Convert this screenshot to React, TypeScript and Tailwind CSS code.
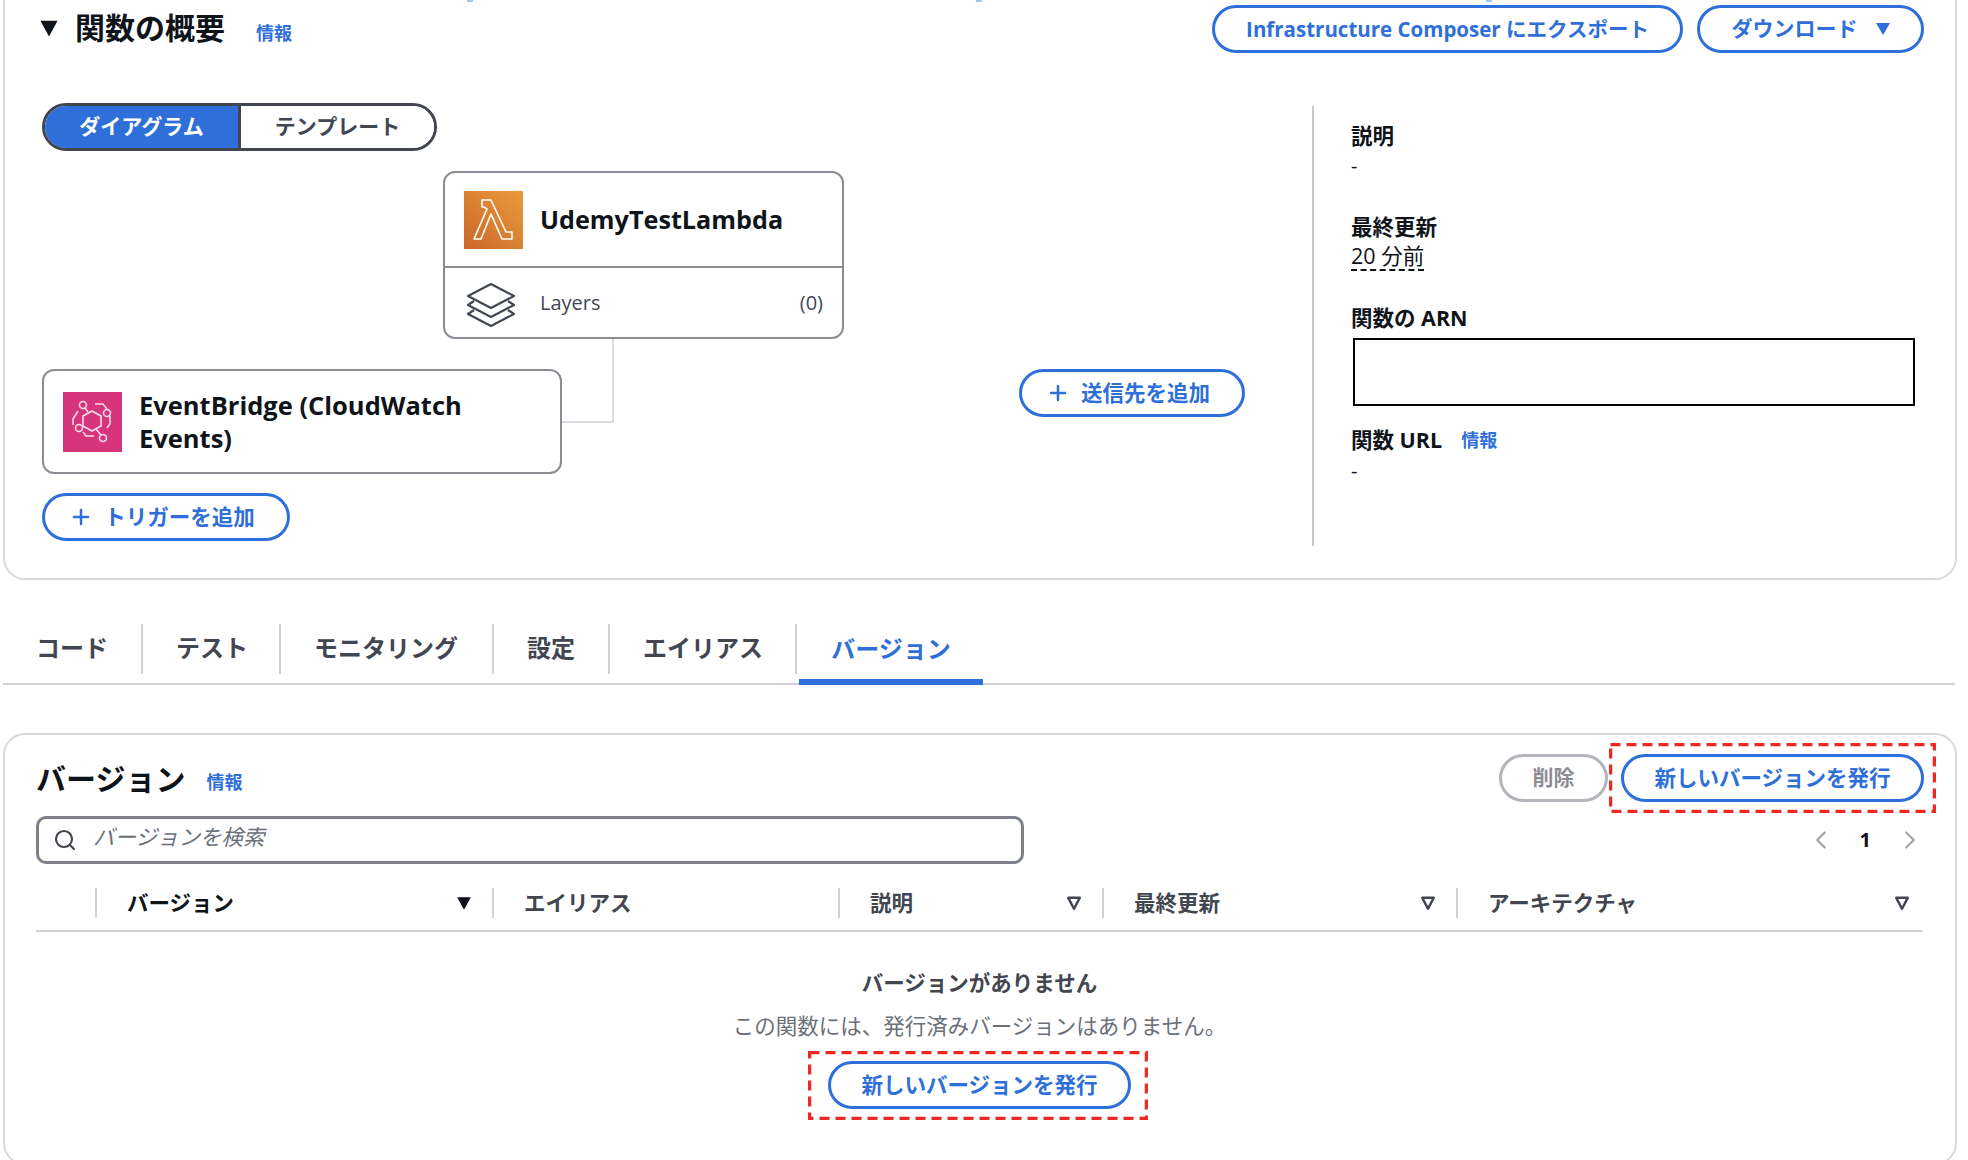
import { Plus, Search, ChevronLeft, ChevronRight } from "lucide-react";

const font = "font-['Open_Sans','Noto_Sans_CJK_JP',sans-serif]";

function BlueButton({ children, className }: { children: React.ReactNode; className: string }) {
  return (
    <button className={`flex h-[48px] items-center justify-center rounded-full border-[3px] border-[#2f6fd9] bg-white font-bold text-[#2f6fd9] ${className}`}>
      {children}
    </button>
  );
}

function Info({ className = "" }: { className?: string }) {
  return <span className={`text-[18px] font-bold text-[#2f6fd9] ${className}`}>情報</span>;
}

// red annotation frame drawn over the screenshot
function RedFrame({ w, h, className }: { w: number; h: number; className: string }) {
  return (
    <svg width={w} height={h} className={`absolute ${className}`} fill="none">
      <rect x="1.5" y="1.5" width={w - 3} height={h - 3} stroke="#ee2a24" strokeWidth="3.5" strokeDasharray="10 6" />
    </svg>
  );
}

function LambdaIcon() {
  return (
    <svg viewBox="0 0 59 58" className="h-[58px] w-[59px] shrink-0">
      <defs>
        <linearGradient id="lam" x1="0" y1="1" x2="1" y2="0">
          <stop offset="0" stopColor="#c9682a" />
          <stop offset="1" stopColor="#ea9a3c" />
        </linearGradient>
      </defs>
      <rect width="59" height="58" fill="url(#lam)" />
      <path
        d="M18 9h9l15 32h6v7h-10L27 23 17 48H10l13-30-3-2h-2z"
        fill="none"
        stroke="#fff"
        strokeWidth="1.6"
        strokeLinejoin="round"
      />
    </svg>
  );
}

function EventBridgeIcon() {
  return (
    <svg viewBox="0 0 59 60" className="h-[60px] w-[59px] shrink-0">
      <rect width="59" height="60" fill="#d6357c" />
      <g fill="none" stroke="#fbdbe9" strokeWidth="1.6">
        <path d="M20 24l9-5 9 5v10l-9 5-9-5z" />
        <circle cx="20" cy="13" r="3.5" />
        <circle cx="44" cy="21" r="3.5" />
        <circle cx="16" cy="36" r="3.5" />
        <circle cx="40" cy="46" r="3.5" />
        <path d="M32 12h8l4 5M22 16l3 4M47 24v8l-3 4M10 33v-6l5-8M20 40l3 4h8M33 37l5 6" />
      </g>
    </svg>
  );
}

function LayersIcon() {
  return (
    <svg viewBox="0 0 54 46" className="mt-[5px] h-[46px] w-[54px] shrink-0" fill="none" stroke="#414750" strokeWidth="2.2" strokeLinejoin="round">
      <path d="M27 2l23 12-23 12L4 14z" />
      <path d="M10 19l-6 4 23 12 23-12-6-4" />
      <path d="M10 28l-6 4 23 12 23-12-6-4" />
    </svg>
  );
}

function Filled({ className = "" }: { className?: string }) {
  return (
    <svg viewBox="0 0 14 14" className={`h-[16px] w-[16px] ${className}`}>
      <path d="M1 2h12L7 13z" fill="#0f141a" />
    </svg>
  );
}

function Hollow() {
  return (
    <svg viewBox="0 0 14 14" className="h-[16px] w-[16px]">
      <path d="M2 2.5h10L7 12z" fill="none" stroke="#424650" strokeWidth="2.2" strokeLinejoin="round" />
    </svg>
  );
}

function Label({ children }: { children: React.ReactNode }) {
  return <div className="text-[21.5px] font-bold leading-[28px] text-[#0f141a]">{children}</div>;
}

const tabs = [
  { label: "コード", w: "w-[107px]" },
  { label: "テスト", w: "w-[138px]" },
  { label: "モニタリング", w: "w-[213px]" },
  { label: "設定", w: "w-[116px]" },
  { label: "エイリアス", w: "w-[187px]" },
];

const columns = [
  { label: "バージョン", w: "w-[397px]", pr: "pr-[20px]", icon: "filled" },
  { label: "エイリアス", w: "w-[346px]", pr: "pr-[14px]", icon: "" },
  { label: "説明", w: "w-[264px]", pr: "pr-[20px]", icon: "hollow" },
  { label: "最終更新", w: "w-[354px]", pr: "pr-[20px]", icon: "hollow" },
  { label: "アーキテクチャ", w: "w-[467px]", pr: "pr-[13px]", icon: "hollow" },
];

export default function App() {
  return (
    <div className={`relative h-[1160px] w-[1968px] overflow-hidden bg-white ${font}`}>
      {/* 関数の概要 */}
      <section className="-mt-5 ml-[3px] flex h-[600px] w-[1954px] flex-col rounded-[22px] border-2 border-[#d8d8dd] pl-[37px] pr-[31px]">
        <div className="flex h-[121px] shrink-0 items-start justify-between pt-[23px]">
          <div className="-ml-[3px] mt-[4px] flex items-center">
            <Filled className="h-[20px] w-[20px]" />
            <h1 className="ml-[16px] text-[30px] font-bold leading-[38px] text-[#0f141a]">関数の概要</h1>
            <Info className="ml-[31px] mt-[10px]" />
          </div>
          <div className="flex gap-[14px]">
            <BlueButton className="w-[471px] text-[20.5px]">Infrastructure Composer にエクスポート</BlueButton>
            <BlueButton className="w-[227px] gap-[18px] text-[21px]">
              ダウンロード
              <svg viewBox="0 0 14 14" className="h-[14px] w-[14px]"><path d="M0 1h14L7 13z" fill="#2f6fd9" /></svg>
            </BlueButton>
          </div>
        </div>

        <div className="flex flex-1">
          {/* diagram */}
          <div className="relative w-[1270px] shrink-0">
            <div className="flex h-[48px] w-[395px] overflow-hidden rounded-full border-[3px] border-[#424650] text-[21px] font-bold">
              <div className="flex w-[193px] items-center justify-center bg-[#2f6fd9] text-white">ダイアグラム</div>
              <div className="flex flex-1 items-center justify-center border-l-[3px] border-[#424650] bg-white text-[#424650]">テンプレート</div>
            </div>

            <div className="ml-[401px] mt-[20px] w-[401px] rounded-[12px] border-2 border-[#8c8c94] bg-white">
              <div className="flex h-[95px] items-center gap-[17px] border-b-2 border-[#8c8c94] px-[19px]">
                <LambdaIcon />
                <span className="text-[25.2px] font-bold text-[#0f141a]">UdemyTestLambda</span>
              </div>
              <div className="flex h-[69px] items-center px-[19px] text-[20px] text-[#414750]">
                <LayersIcon />
                <span className="ml-[22px] flex-1">Layers</span>
                <span>(0)</span>
              </div>
            </div>

            {/* connector */}
            <div className="absolute left-[519px] top-[236px] h-[84px] w-[53px] border-b-2 border-r-2 border-[#dcdce0]" />

            <div className="relative mt-[30px] flex items-start justify-between pr-[67px]">
              <div className="flex h-[105px] w-[520px] items-center gap-[17px] rounded-[12px] border-2 border-[#8c8c94] bg-white px-[19px]">
                <EventBridgeIcon />
                <span className="text-[25.5px] font-bold leading-[33px] text-[#0f141a]">
                  EventBridge (CloudWatch
                  <br />
                  Events)
                </span>
              </div>
              <BlueButton className="w-[226px] gap-[11px] pr-[8px] text-[21.5px]">
                <Plus size={24} strokeWidth={2.5} />
                送信先を追加
              </BlueButton>
            </div>

            <BlueButton className="mt-[19px] w-[248px] gap-[11px] pr-[8px] text-[21.5px]">
              <Plus size={24} strokeWidth={2.5} />
              トリガーを追加
            </BlueButton>
          </div>

          {/* details */}
          <div className="mt-[3px] h-[440px] flex-1 border-l-2 border-[#c6c6cd] pl-[37px]">
            <div className="pt-[16px]">
              <Label>説明</Label>
              <div className="mt-[2px] text-[20px] leading-[28px] text-[#0f141a]">-</div>
            </div>
            <div className="mt-[33px]">
              <Label>最終更新</Label>
              <div className="mt-[1px] w-fit border-b-2 border-dashed border-[#0f141a] text-[21.5px] leading-[27px] text-[#0f141a]">20 分前</div>
            </div>
            <div className="mt-[33px]">
              <Label>関数の ARN</Label>
              <div className="ml-[2px] mt-[6px] h-[68px] w-[562px] border-2 border-black bg-white" />
            </div>
            <div className="mt-[20px] flex items-center gap-[19px]">
              <Label>関数 URL</Label>
              <Info />
            </div>
            <div className="mt-[3px] text-[20px] leading-[28px] text-[#0f141a]">-</div>
          </div>
        </div>
      </section>

      {/* tabs */}
      <nav className="ml-[3px] mt-[44px] flex h-[61px] w-[1952px] border-b-2 border-[#d0d0d6] pl-[33px] text-[24px] font-bold text-[#424650]">
        {tabs.map((t) => (
          <div key={t.label} className={`${t.w} mb-[9px] flex items-center border-r-2 border-[#d0d0d6] pb-[2px]`}>
            <span className={t.label === "コード" ? "" : "ml-[33px]"}>{t.label}</span>
          </div>
        ))}
        <div className="relative -mb-[2px] ml-[2px] flex w-[184px] items-center justify-center border-b-[6px] border-[#2f6fd9] pb-[6px] text-[#2f6fd9]">
          バージョン
        </div>
      </nav>

      {/* バージョン */}
      <section className="ml-[3px] mt-[48px] h-[432px] w-[1954px] rounded-[22px] border-2 border-[#d8d8dd] pl-[31px] pr-[31px]">
        <div className="flex h-[81px] items-center justify-between pt-[5px]">
          <div className="flex items-center">
            <h2 className="text-[30px] font-bold text-[#0f141a]">バージョン</h2>
            <Info className="ml-[21px] mt-[9px]" />
          </div>
          <div className="flex items-center gap-[13px]">
            <button className="flex h-[48px] w-[109px] items-center justify-center rounded-full border-[3px] border-[#b4b4bb] text-[21px] font-bold text-[#8c8c94]">削除</button>
            <div className="relative">
              <BlueButton className="w-[303px] text-[21.5px]">新しいバージョンを発行</BlueButton>
              <RedFrame w={327} h={70} className="-left-[12px] -top-[11px]" />
            </div>
          </div>
        </div>

        <div className="flex items-center justify-between">
          <div className="flex h-[48px] w-[988px] items-center gap-[16px] rounded-[10px] border-[3px] border-[#7d8089] px-[14px]">
            <Search size={24} strokeWidth={2.2} className="text-[#424650]" />
            <span className="mb-[6px] text-[21.5px] italic text-[#6b6f78]">バージョンを検索</span>
          </div>
          <div className="-mr-[1px] flex items-center gap-[24px] text-[20px] font-bold text-[#0f141a]">
            <ChevronLeft size={30} strokeWidth={1.8} className="text-[#a4a4ad]" />
            <span>1</span>
            <ChevronRight size={30} strokeWidth={1.8} className="text-[#a4a4ad]" />
          </div>
        </div>

        <div className="mt-[24px] flex h-[44px] w-[1887px] items-start border-b-2 border-[#d0d0d6] pl-[59px] text-[21.5px] font-bold text-[#424650]">
          {columns.map((c) => (
            <div key={c.label} className={`${c.w} ${c.pr} flex h-[30px] items-center justify-between border-l-2 border-[#d0d0d6] pl-[30px] ${c.label === "バージョン" ? "text-[#0f141a]" : ""}`}>
              {c.label}
              {c.icon === "filled" && <Filled />}
              {c.icon === "hollow" && <Hollow />}
            </div>
          ))}
        </div>

        <div className="flex w-[1887px] flex-col items-center">
          <div className="mt-[37px] text-[21.5px] font-bold leading-[28px] text-[#424650]">バージョンがありません</div>
          <div className="mt-[15px] text-[21.5px] leading-[28px] text-[#6b6f78]">この関数には、発行済みバージョンはありません。</div>
          <div className="relative mt-[21px]">
            <BlueButton className="w-[303px] text-[21.5px]">新しいバージョンを発行</BlueButton>
            <RedFrame w={340} h={69} className="-left-[20px] -top-[10px]" />
          </div>
        </div>
      </section>

      {/* cut off marks at the top edge */}
      <span className="absolute left-[467px] top-0 h-[2px] w-[6px] bg-[#9cc8ee]" />
      <span className="absolute left-[976px] top-0 h-[2px] w-[6px] bg-[#9cc8ee]" />
      <span className="absolute left-[1486px] top-0 h-[2px] w-[6px] bg-[#9cc8ee]" />
    </div>
  );
}
